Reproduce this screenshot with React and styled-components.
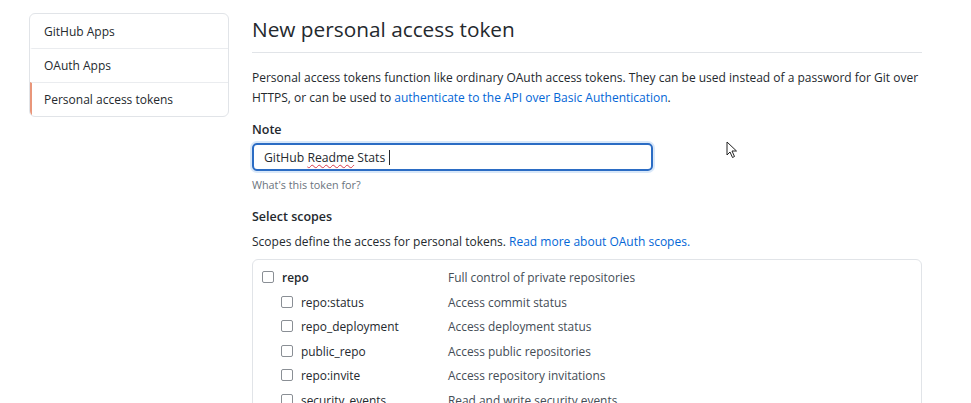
import React from "react";
import styled, { createGlobalStyle } from "styled-components";

const Global = createGlobalStyle`
  html, body { margin: 0; padding: 0; background: #fff; }
  body { font-family: "Open Sans", "Noto Sans", sans-serif; color: #24292e; }
`;

const Page = styled.div`
  position: relative;
  display: flex;
  gap: 23px;
  padding: 13px 49px 0 29px;
  width: 971px;
  height: 403px;
  box-sizing: border-box;
  overflow: hidden;
`;

const Sidebar = styled.nav`
  width: 200px;
  flex: none;
  align-self: flex-start;
  border: 1px solid #e1e4e8;
  border-radius: 6px;
  box-sizing: border-box;
  overflow: hidden;
`;

const NavItem = styled.div`
  height: 34px;
  display: flex;
  align-items: center;
  padding-left: 12px;
  font-size: 12px;
  color: #24292e;
  border-top: ${(p) => (p.$first ? "none" : "1px solid #eaecef")};
  border-left: 2px solid ${(p) => (p.$active ? "#e9967a" : "transparent")};
  box-sizing: border-box;
`;

const Main = styled.main`
  flex: 1;
  min-width: 0;
`;

const Title = styled.h1`
  margin: 0;
  padding: 2px 0 9px;
  font-size: 20.8px;
  font-weight: 400;
  line-height: 28px;
  border-bottom: 1px solid #e1e4e8;
`;

const Para = styled.p`
  margin: 15px 0 0;
  font-size: 12px;
  line-height: 20px;
  color: #24292e;
`;

const Link = styled.a`
  color: #0366d6;
  text-decoration: none;
`;

const Label = styled.div`
  margin-top: ${(p) => p.$mt || 0}px;
  font-size: 12.5px;
  font-weight: 600;
  line-height: 20px;
`;

const Input = styled.div`
  margin-top: 3px;
  width: 401px;
  height: 28px;
  box-sizing: border-box;
  border: 2px solid #2b6cc4;
  border-radius: 5px;
  box-shadow: 0 0 0 2px rgba(3, 102, 214, 0.15);
  display: flex;
  align-items: center;
  padding-left: 10px;
  font-size: 12.2px;
  color: #24292e;
`;

const Spell = styled.span`
  text-decoration: underline wavy #d73a49;
  text-decoration-thickness: 1px;
  text-underline-offset: 2px;
`;

const Caret = styled.span`
  display: inline-block;
  width: 1px;
  height: 15px;
  background: #24292e;
  margin-left: 4px;
`;

const Hint = styled.div`
  margin-top: 6px;
  font-size: 10.8px;
  color: #6a737d;
  line-height: 16px;
`;

const Desc = styled.div`
  margin-top: 5px;
  font-size: 12px;
  line-height: 20px;
`;

const ScopeBox = styled.div`
  margin-top: 7px;
  border: 1px solid #e1e4e8;
  border-radius: 6px;
  padding: 5px 0 0 9px;
  height: 200px;
  box-sizing: border-box;
`;

const Row = styled.div`
  display: grid;
  grid-template-columns: 186px 1fr;
  align-items: center;
  height: 24.5px;
  font-size: 11.9px;
`;

const NameCell = styled.label`
  display: flex;
  align-items: center;
  gap: 8px;
  padding-left: ${(p) => (p.$sub ? 19 : 0)}px;
`;

const Box = styled.span`
  width: 12px;
  height: 12px;
  border: 1px solid #8a8f95;
  border-radius: 2px;
  box-sizing: border-box;
  flex: none;
`;

const ScopeName = styled.span`
  font-weight: ${(p) => (p.$bold ? 600 : 400)};
  color: #24292e;
`;

const ScopeDesc = styled.span`
  color: #444d56;
`;

const Cursor = styled.svg`
  position: absolute;
  left: 726px;
  top: 141px;
`;

const nav = ["GitHub Apps", "OAuth Apps", "Personal access tokens"];
const scopes = [
  ["repo", "Full control of private repositories", false],
  ["repo:status", "Access commit status", true],
  ["repo_deployment", "Access deployment status", true],
  ["public_repo", "Access public repositories", true],
  ["repo:invite", "Access repository invitations", true],
  ["security_events", "Read and write security events", true],
];

export default function App() {
  return (
    <>
      <Global />
      <Page>
        <Sidebar>
          {nav.map((n, i) => (
            <NavItem key={n} $first={i === 0} $active={i === 2}>
              {n}
            </NavItem>
          ))}
        </Sidebar>
        <Main>
          <Title>New personal access token</Title>
          <Para>
            Personal access tokens function like ordinary OAuth access tokens. They can be used instead of a password for Git over
            HTTPS, or can be used to <Link>authenticate to the API over Basic Authentication</Link>.
          </Para>
          <Label $mt={12}>Note</Label>
          <Input>
            GitHub&nbsp;<Spell>Readme</Spell>&nbsp;Stats<Caret />
          </Input>
          <Hint>What's this token for?</Hint>
          <Label $mt={14}>Select scopes</Label>
          <Desc>
            Scopes define the access for personal tokens. <Link>Read more about OAuth scopes.</Link>
          </Desc>
          <ScopeBox>
            {scopes.map(([name, desc, sub]) => (
              <Row key={name}>
                <NameCell $sub={sub}>
                  <Box />
                  <ScopeName $bold={!sub}>{name}</ScopeName>
                </NameCell>
                <ScopeDesc>{desc}</ScopeDesc>
              </Row>
            ))}
          </ScopeBox>
        </Main>
        <Cursor width="12" height="18" viewBox="0 0 12 18">
          <path d="M1 1 L1 14 L4 11 L6.5 16.5 L8.5 15.5 L6 10 L10.5 10 Z" fill="#fff" stroke="#222" strokeWidth="1" strokeLinejoin="round" />
        </Cursor>
      </Page>
    </>
  );
}
